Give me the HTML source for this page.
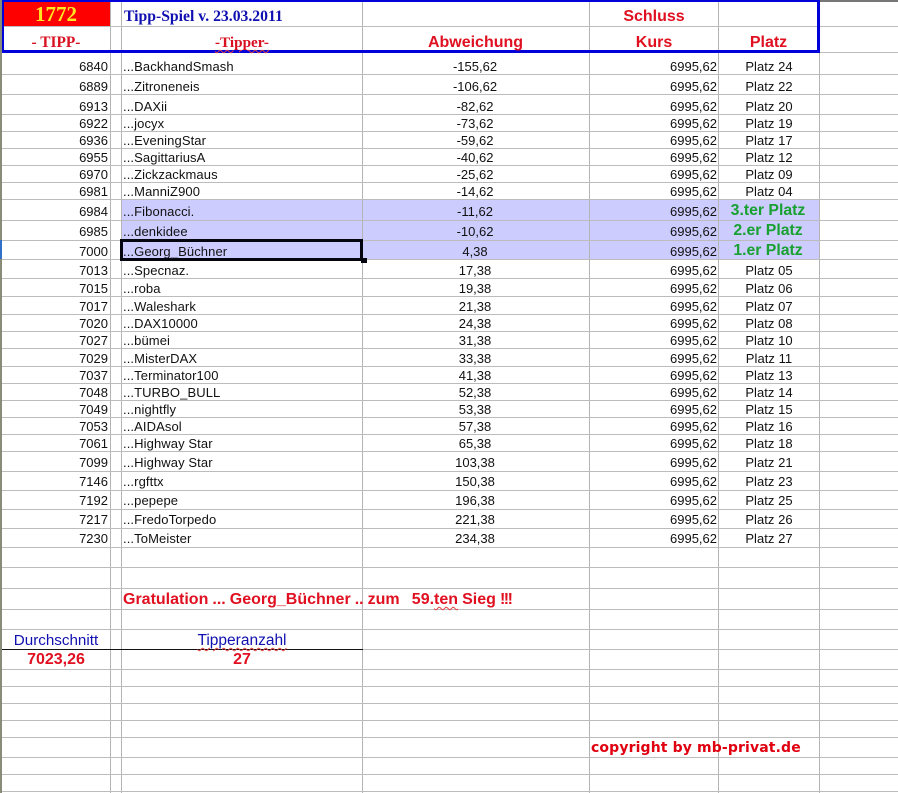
<!DOCTYPE html>
<html><head><meta charset="utf-8"><style>
html,body{margin:0;padding:0;background:#fff}
#s{position:relative;width:898px;height:793px;overflow:hidden;background:#fff;font:13px/16px "Liberation Sans",Arial,sans-serif;color:#111}
#s div,#s span{position:absolute;white-space:nowrap}
.h{left:2px;width:896px;height:1px;background:#bcbcbc}
.v{top:0;width:1px;height:793px;background:#b4b4b4}
.r{left:0;width:898px;height:16px;margin-top:1px}
.a{right:790px}
.n{left:123px;letter-spacing:.1px}
.d{left:415px;width:120px;text-align:center}
.k{right:181px}
.p{left:719px;width:100px;text-align:center;letter-spacing:.05px}
.g{left:718px;width:100px;text-align:center;font-weight:bold;font-size:15.8px;color:#18a030}
.t{font-weight:bold;color:#e01020;text-align:center;font-size:16px}
.w{text-decoration:underline wavy #e04040 1px;text-underline-offset:2px}
</style></head><body><div id="s">
<div style="left:122px;top:199px;width:697px;height:60px;background:#ccf"></div>
<div style="left:2px;top:2px;width:108px;height:24px;background:#f00"></div>
<div class="v" style="left:110px"></div><div class="v" style="left:121px"></div><div class="v" style="left:362px"></div><div class="v" style="left:589px"></div><div class="v" style="left:718px"></div><div class="v" style="left:819px"></div>
<div class="h" style="top:26px"></div><div class="h" style="top:52px"></div><div class="h" style="top:74px"></div><div class="h" style="top:94px"></div><div class="h" style="top:114px"></div><div class="h" style="top:131px"></div><div class="h" style="top:148px"></div><div class="h" style="top:165px"></div><div class="h" style="top:182px"></div><div class="h" style="top:199px"></div><div class="h" style="top:220px"></div><div class="h" style="top:240px"></div><div class="h" style="top:259px"></div><div class="h" style="top:278px"></div><div class="h" style="top:296px"></div><div class="h" style="top:314px"></div><div class="h" style="top:331px"></div><div class="h" style="top:348px"></div><div class="h" style="top:366px"></div><div class="h" style="top:383px"></div><div class="h" style="top:400px"></div><div class="h" style="top:417px"></div><div class="h" style="top:434px"></div><div class="h" style="top:451px"></div><div class="h" style="top:471px"></div><div class="h" style="top:490px"></div><div class="h" style="top:509px"></div><div class="h" style="top:528px"></div><div class="h" style="top:547px"></div><div class="h" style="top:567px"></div><div class="h" style="top:588px"></div><div class="h" style="top:609px"></div><div class="h" style="top:629px"></div><div class="h" style="top:649px"></div><div class="h" style="top:669px"></div><div class="h" style="top:686px"></div><div class="h" style="top:703px"></div><div class="h" style="top:720px"></div><div class="h" style="top:737px"></div><div class="h" style="top:757px"></div><div class="h" style="top:774px"></div><div class="h" style="top:791px"></div>
<div style="left:2px;top:649px;width:361px;height:1px;background:#111"></div>
<div style="left:0;top:0;width:2px;height:793px;background:#8a8a78"></div>
<div style="left:0;top:240px;width:2px;height:19px;background:#3070c8"></div>
<div style="left:2px;top:0;width:896px;height:2px;background:#777"></div>
<div style="left:2px;top:0;width:818px;height:53px;box-sizing:border-box;border:2px solid #0000d8;border-top-width:2px;border-bottom-width:3px;border-right-width:3px"></div>
<div style="left:120px;top:239px;width:243px;height:22px;box-sizing:border-box;border:3px solid #050510"></div>
<div style="left:361px;top:258px;width:6px;height:5px;background:#050510"></div>

<div style="left:2px;top:2px;width:108px;text-align:center;font:bold 21px/24px 'Liberation Serif',serif;color:#ffe820">1772</div>
<div style="left:124px;top:8px;font:bold 15.7px/18px 'Liberation Serif',serif;color:#1010b0">Tipp-Spiel v. 23.03.2011</div>
<div class="t" style="left:590px;width:128px;top:9px">Schluss</div>
<div style="left:2px;width:108px;top:35px;text-align:center;font:bold 15.4px/16px 'Liberation Serif',serif;color:#d81020">- TIPP-</div>
<div style="left:122px;width:240px;top:35px;text-align:center;font:bold 15.2px/16px 'Liberation Serif',serif;color:#d81020"><span class="w" style="position:static">-Tipper-</span></div>
<div class="t" style="left:362px;width:227px;top:35px">Abweichung</div>
<div class="t" style="left:590px;width:128px;top:35px">Kurs</div>
<div class="t" style="left:718px;width:101px;top:35px">Platz</div>

<div class="r" style="top:58px"><span class="a">6840</span><span class="n">...BackhandSmash</span><span class="d">-155,62</span><span class="k">6995,62</span><span class="p">Platz 24</span></div>
<div class="r" style="top:78px"><span class="a">6889</span><span class="n">...Zitroneneis</span><span class="d">-106,62</span><span class="k">6995,62</span><span class="p">Platz 22</span></div>
<div class="r" style="top:98px"><span class="a">6913</span><span class="n">...DAXii</span><span class="d">-82,62</span><span class="k">6995,62</span><span class="p">Platz 20</span></div>
<div class="r" style="top:115px"><span class="a">6922</span><span class="n">...jocyx</span><span class="d">-73,62</span><span class="k">6995,62</span><span class="p">Platz 19</span></div>
<div class="r" style="top:132px"><span class="a">6936</span><span class="n">...EveningStar</span><span class="d">-59,62</span><span class="k">6995,62</span><span class="p">Platz 17</span></div>
<div class="r" style="top:149px"><span class="a">6955</span><span class="n">...SagittariusA</span><span class="d">-40,62</span><span class="k">6995,62</span><span class="p">Platz 12</span></div>
<div class="r" style="top:166px"><span class="a">6970</span><span class="n">...Zickzackmaus</span><span class="d">-25,62</span><span class="k">6995,62</span><span class="p">Platz 09</span></div>
<div class="r" style="top:183px"><span class="a">6981</span><span class="n">...ManniZ900</span><span class="d">-14,62</span><span class="k">6995,62</span><span class="p">Platz 04</span></div>
<div class="r" style="top:203px"><span class="a">6984</span><span class="n">...Fibonacci.</span><span class="d">-11,62</span><span class="k">6995,62</span><span class="g" style="top:-1px">3.ter Platz</span></div>
<div class="r" style="top:223px"><span class="a">6985</span><span class="n">...denkidee</span><span class="d">-10,62</span><span class="k">6995,62</span><span class="g" style="top:-1px">2.er Platz</span></div>
<div class="r" style="top:243px"><span class="a">7000</span><span class="n">...Georg_Büchner</span><span class="d">4,38</span><span class="k">6995,62</span><span class="g" style="top:-1px">1.er Platz</span></div>
<div class="r" style="top:262px"><span class="a">7013</span><span class="n">...Specnaz.</span><span class="d">17,38</span><span class="k">6995,62</span><span class="p">Platz 05</span></div>
<div class="r" style="top:280px"><span class="a">7015</span><span class="n">...roba</span><span class="d">19,38</span><span class="k">6995,62</span><span class="p">Platz 06</span></div>
<div class="r" style="top:298px"><span class="a">7017</span><span class="n">...Waleshark</span><span class="d">21,38</span><span class="k">6995,62</span><span class="p">Platz 07</span></div>
<div class="r" style="top:315px"><span class="a">7020</span><span class="n">...DAX10000</span><span class="d">24,38</span><span class="k">6995,62</span><span class="p">Platz 08</span></div>
<div class="r" style="top:332px"><span class="a">7027</span><span class="n">...bümei</span><span class="d">31,38</span><span class="k">6995,62</span><span class="p">Platz 10</span></div>
<div class="r" style="top:350px"><span class="a">7029</span><span class="n">...MisterDAX</span><span class="d">33,38</span><span class="k">6995,62</span><span class="p">Platz 11</span></div>
<div class="r" style="top:367px"><span class="a">7037</span><span class="n">...Terminator100</span><span class="d">41,38</span><span class="k">6995,62</span><span class="p">Platz 13</span></div>
<div class="r" style="top:384px"><span class="a">7048</span><span class="n">...TURBO_BULL</span><span class="d">52,38</span><span class="k">6995,62</span><span class="p">Platz 14</span></div>
<div class="r" style="top:401px"><span class="a">7049</span><span class="n">...nightfly</span><span class="d">53,38</span><span class="k">6995,62</span><span class="p">Platz 15</span></div>
<div class="r" style="top:418px"><span class="a">7053</span><span class="n">...AIDAsol</span><span class="d">57,38</span><span class="k">6995,62</span><span class="p">Platz 16</span></div>
<div class="r" style="top:435px"><span class="a">7061</span><span class="n">...Highway Star</span><span class="d">65,38</span><span class="k">6995,62</span><span class="p">Platz 18</span></div>
<div class="r" style="top:454px"><span class="a">7099</span><span class="n">...Highway Star</span><span class="d">103,38</span><span class="k">6995,62</span><span class="p">Platz 21</span></div>
<div class="r" style="top:473px"><span class="a">7146</span><span class="n">...rgfttx</span><span class="d">150,38</span><span class="k">6995,62</span><span class="p">Platz 23</span></div>
<div class="r" style="top:492px"><span class="a">7192</span><span class="n">...pepepe</span><span class="d">196,38</span><span class="k">6995,62</span><span class="p">Platz 25</span></div>
<div class="r" style="top:511px"><span class="a">7217</span><span class="n">...FredoTorpedo</span><span class="d">221,38</span><span class="k">6995,62</span><span class="p">Platz 26</span></div>
<div class="r" style="top:530px"><span class="a">7230</span><span class="n">...ToMeister</span><span class="d">234,38</span><span class="k">6995,62</span><span class="p">Platz 27</span></div>

<div class="t" style="left:123px;top:592px;white-space:pre;word-spacing:-.4px">Gratulation ... Georg_Büchner .. zum   59.<span class="w" style="position:static">ten</span> Sieg <span style="position:static;letter-spacing:-1.5px">!!!</span></div>
<div style="left:2px;width:108px;top:633px;text-align:center;font-size:15.2px;color:#1010b0">Durchschnitt</div>
<div style="left:122px;width:240px;top:633px;text-align:center;font-size:15.5px;color:#1010b0"><span class="w" style="position:static">Tipperanzahl</span></div>
<div class="t" style="left:2px;width:108px;top:652px">7023,26</div>
<div class="t" style="left:122px;width:240px;top:652px">27</div>
<div style="left:591px;top:740px;font:bold 14px/16px 'DejaVu Sans',sans-serif;color:#e00010;letter-spacing:.13px">copyright by mb-privat.de</div>
</div></body></html>
